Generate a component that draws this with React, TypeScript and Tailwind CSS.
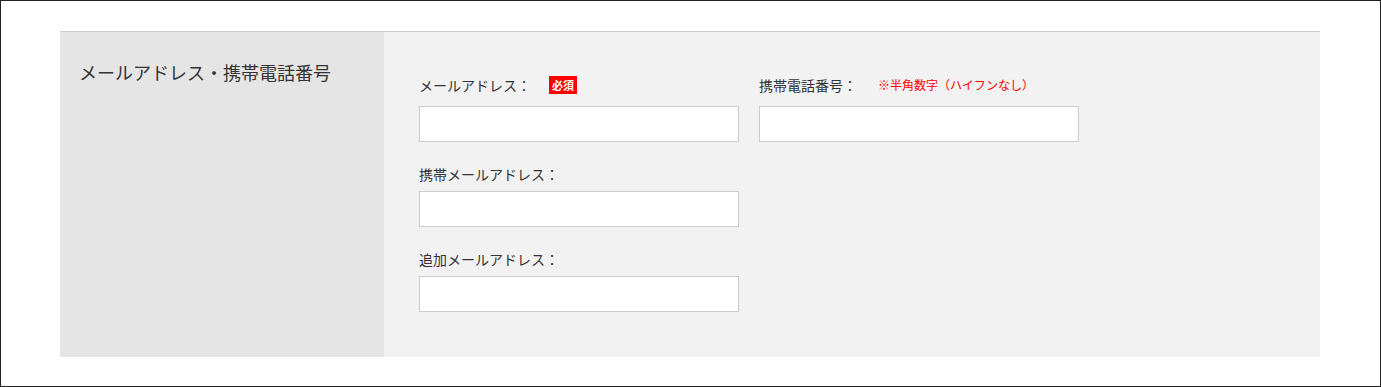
import { ReactNode } from 'react';

const font = {
  fontFamily: '"Noto Sans CJK JP", "Noto Sans", sans-serif',
};

function Field({
  label,
  extra,
  className = '',
  labelGap = 'mb-[7px]',
}: {
  label: string;
  extra?: ReactNode;
  className?: string;
  labelGap?: string;
}) {
  return (
    <div className={'w-[320px] ' + className}>
      <div className={'flex h-[20px] items-center ' + labelGap}>
        <span className="text-[14px] leading-[20px] text-[#333]">{label}</span>
        {extra}
      </div>
      <input
        type="text"
        className="block h-[36px] w-[320px] border border-[#ccc] bg-white px-2 text-[14px] outline-none"
      />
    </div>
  );
}

export default function App() {
  return (
    <div
      className="h-[387px] w-[1381px] border border-[#222] bg-white pl-[59px] pt-[30px]"
      style={font}
    >
      <div className="flex h-[326px] w-[1260px] border-t border-[#ccc]">
        <div className="w-[324px] shrink-0 bg-[#e5e5e5] pl-[19px] pt-[27px]">
          <h2 className="text-[18px] leading-[26px] font-normal text-[#333]">
            メールアドレス・携帯電話番号
          </h2>
        </div>

        <div className="flex-1 bg-[#f2f2f2] pl-[35px] pt-[43px]">
          <div className="flex gap-[20px]">
            <Field
              label="メールアドレス："
              labelGap="mb-[11px]"
              extra={
                <span className="ml-[18px] flex h-[18px] w-[28px] items-center justify-center bg-[#f00] text-[11px] leading-none font-bold text-white">
                  必須
                </span>
              }
            />
            <Field
              label="携帯電話番号："
              labelGap="mb-[11px]"
              extra={
                <span className="ml-[21px] text-[12px] leading-[20px] text-[#f00]">
                  ※半角数字（ハイフンなし）
                </span>
              }
            />
          </div>

          <Field label="携帯メールアドレス：" className="mt-[22px]" />
          <Field label="追加メールアドレス：" className="mt-[22px]" />
        </div>
      </div>
    </div>
  );
}
